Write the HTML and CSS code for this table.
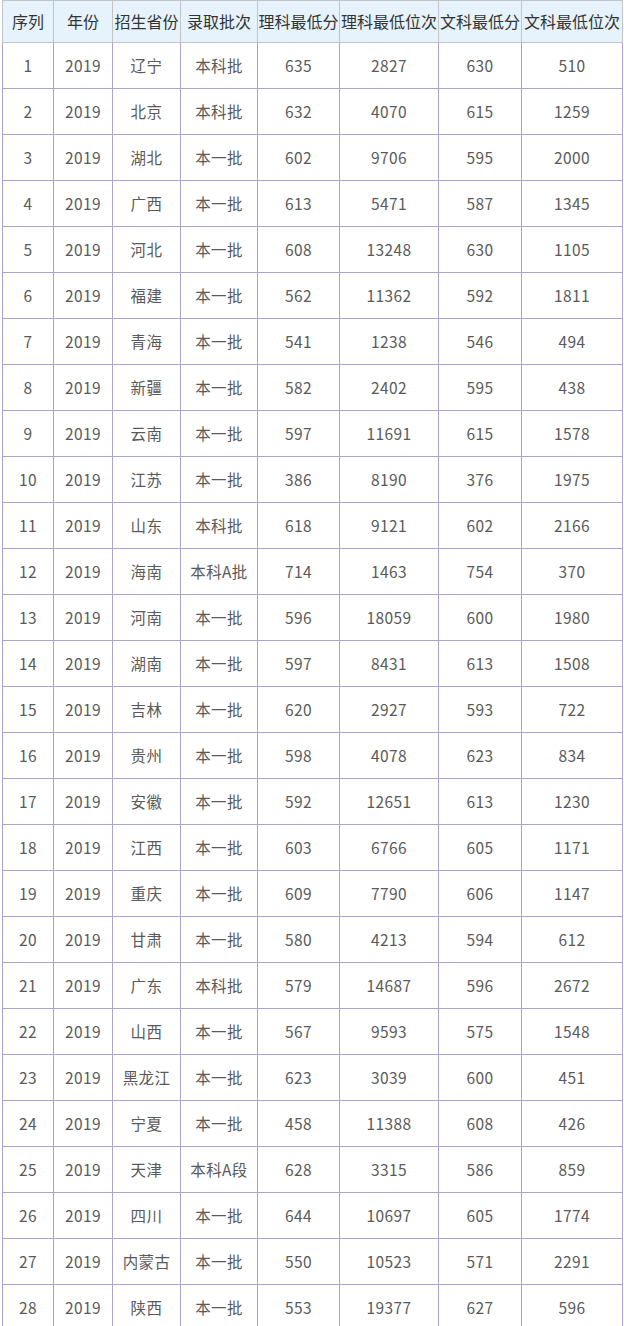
FILE: index.html
```html
<!DOCTYPE html>
<html lang="zh">
<head>
<meta charset="utf-8">
<link rel="stylesheet" href="styles.css">
</head>
<body>
<table class="score">
<colgroup>
<col class="c1"><col class="c2"><col class="c3"><col class="c4"><col class="c5"><col class="c6"><col class="c7"><col class="c8">
</colgroup>
<thead>
<tr><th>序列</th><th>年份</th><th>招生省份</th><th>录取批次</th><th>理科最低分</th><th>理科最低位次</th><th>文科最低分</th><th>文科最低位次</th></tr>
</thead>
<tbody>
<tr><td>1</td><td>2019</td><td>辽宁</td><td>本科批</td><td>635</td><td>2827</td><td>630</td><td>510</td></tr>
<tr><td>2</td><td>2019</td><td>北京</td><td>本科批</td><td>632</td><td>4070</td><td>615</td><td>1259</td></tr>
<tr><td>3</td><td>2019</td><td>湖北</td><td>本一批</td><td>602</td><td>9706</td><td>595</td><td>2000</td></tr>
<tr><td>4</td><td>2019</td><td>广西</td><td>本一批</td><td>613</td><td>5471</td><td>587</td><td>1345</td></tr>
<tr><td>5</td><td>2019</td><td>河北</td><td>本一批</td><td>608</td><td>13248</td><td>630</td><td>1105</td></tr>
<tr><td>6</td><td>2019</td><td>福建</td><td>本一批</td><td>562</td><td>11362</td><td>592</td><td>1811</td></tr>
<tr><td>7</td><td>2019</td><td>青海</td><td>本一批</td><td>541</td><td>1238</td><td>546</td><td>494</td></tr>
<tr><td>8</td><td>2019</td><td>新疆</td><td>本一批</td><td>582</td><td>2402</td><td>595</td><td>438</td></tr>
<tr><td>9</td><td>2019</td><td>云南</td><td>本一批</td><td>597</td><td>11691</td><td>615</td><td>1578</td></tr>
<tr><td>10</td><td>2019</td><td>江苏</td><td>本一批</td><td>386</td><td>8190</td><td>376</td><td>1975</td></tr>
<tr><td>11</td><td>2019</td><td>山东</td><td>本科批</td><td>618</td><td>9121</td><td>602</td><td>2166</td></tr>
<tr><td>12</td><td>2019</td><td>海南</td><td>本科A批</td><td>714</td><td>1463</td><td>754</td><td>370</td></tr>
<tr><td>13</td><td>2019</td><td>河南</td><td>本一批</td><td>596</td><td>18059</td><td>600</td><td>1980</td></tr>
<tr><td>14</td><td>2019</td><td>湖南</td><td>本一批</td><td>597</td><td>8431</td><td>613</td><td>1508</td></tr>
<tr><td>15</td><td>2019</td><td>吉林</td><td>本一批</td><td>620</td><td>2927</td><td>593</td><td>722</td></tr>
<tr><td>16</td><td>2019</td><td>贵州</td><td>本一批</td><td>598</td><td>4078</td><td>623</td><td>834</td></tr>
<tr><td>17</td><td>2019</td><td>安徽</td><td>本一批</td><td>592</td><td>12651</td><td>613</td><td>1230</td></tr>
<tr><td>18</td><td>2019</td><td>江西</td><td>本一批</td><td>603</td><td>6766</td><td>605</td><td>1171</td></tr>
<tr><td>19</td><td>2019</td><td>重庆</td><td>本一批</td><td>609</td><td>7790</td><td>606</td><td>1147</td></tr>
<tr><td>20</td><td>2019</td><td>甘肃</td><td>本一批</td><td>580</td><td>4213</td><td>594</td><td>612</td></tr>
<tr><td>21</td><td>2019</td><td>广东</td><td>本科批</td><td>579</td><td>14687</td><td>596</td><td>2672</td></tr>
<tr><td>22</td><td>2019</td><td>山西</td><td>本一批</td><td>567</td><td>9593</td><td>575</td><td>1548</td></tr>
<tr><td>23</td><td>2019</td><td>黑龙江</td><td>本一批</td><td>623</td><td>3039</td><td>600</td><td>451</td></tr>
<tr><td>24</td><td>2019</td><td>宁夏</td><td>本一批</td><td>458</td><td>11388</td><td>608</td><td>426</td></tr>
<tr><td>25</td><td>2019</td><td>天津</td><td>本科A段</td><td>628</td><td>3315</td><td>586</td><td>859</td></tr>
<tr><td>26</td><td>2019</td><td>四川</td><td>本一批</td><td>644</td><td>10697</td><td>605</td><td>1774</td></tr>
<tr><td>27</td><td>2019</td><td>内蒙古</td><td>本一批</td><td>550</td><td>10523</td><td>571</td><td>2291</td></tr>
<tr><td>28</td><td>2019</td><td>陕西</td><td>本一批</td><td>553</td><td>19377</td><td>627</td><td>596</td></tr>
</tbody>
</table>
</body>
</html>
```
FILE: styles.css
```css
html, body {
  margin: 0;
  padding: 0;
  background: #fff;
}
body {
  padding-left: 2px;
  font-family: "Noto Sans CJK SC", "Noto Sans", sans-serif;
}
.score {
  border-collapse: collapse;
  table-layout: fixed;
  width: 621px;
}
.c1 { width: 51px; }
.c2 { width: 59px; }
.c3 { width: 68px; }
.c4 { width: 77px; }
.c5 { width: 82px; }
.c6 { width: 99px; }
.c7 { width: 83px; }
.c8 { width: 101px; }
.score th,
.score td {
  padding: 0 0 2px;
  text-align: center;
  vertical-align: middle;
  white-space: nowrap;
  overflow: hidden;
  line-height: 20px;
}
.score th {
  height: 39px;
  background: #e6f3fc;
  border: 1px solid #c4c4c8;
  color: #333;
  font-size: 16px;
  font-weight: normal;
}
.score td {
  height: 43px;
  border: 1px solid #aaa3d3;
  color: #5a5a5a;
  font-size: 15.5px;
  letter-spacing: 0.4px;
}
```
